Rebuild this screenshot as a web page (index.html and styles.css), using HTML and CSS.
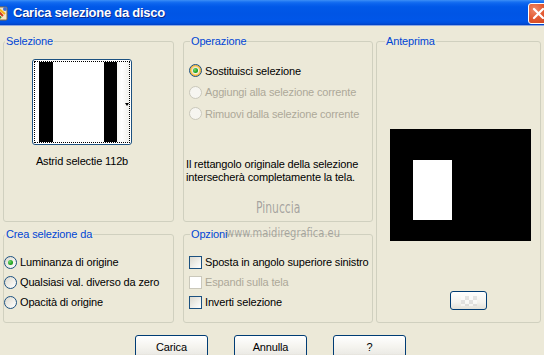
FILE: index.html
```html
<!DOCTYPE html>
<html lang="it">
<head>
<meta charset="utf-8">
<title>Carica selezione da disco</title>
<link rel="stylesheet" href="styles.css">
</head>
<body>
<div class="window">
  <div class="titlebar">
    <div class="title-left">
      <svg class="app-icon" width="16" height="16" viewBox="0 0 16 16">
        <rect x="1" y="2" width="12" height="13" rx="1" fill="#f4e7c8" stroke="#8a6a3a" stroke-width="1"/>
        <path d="M3 5 L9 11" stroke="#d23a1e" stroke-width="2"/>
        <path d="M5 4 L11 9" stroke="#f2b21b" stroke-width="2"/>
        <path d="M3 9 L7 13" stroke="#2f8f2f" stroke-width="2"/>
        <circle cx="11" cy="4" r="2" fill="#3c6fd8"/>
      </svg>
      <span class="title-text">Carica selezione da disco</span>
    </div>
    <div class="close-btn">
      <svg width="21" height="21" viewBox="0 0 21 21">
        <path d="M6 6 L15 15 M15 6 L6 15" stroke="#fff" stroke-width="2.2" stroke-linecap="round"/>
      </svg>
    </div>
  </div>

  <div class="content">
    <fieldset class="group g-sel">
      <legend class="lg-3">Selezione</legend>
      <div class="sel-wrap">
        <div class="thumb">
          <div class="thumb-inner">
            <span class="t-white t-w1"></span>
            <span class="t-black t-b1"></span>
            <span class="t-white t-w2"></span>
            <span class="t-black t-b2"></span>
            <span class="t-strip"><span class="t-arrow"></span></span>
          </div>
        </div>
        <div class="sel-name">Astrid selectie 112b</div>
      </div>
    </fieldset>

    <fieldset class="group g-op">
      <legend class="lg-8">Operazione</legend>
      <div class="op-list">
        <div class="row r-op"><span class="radio checked focus"></span><span>Sostituisci selezione</span></div>
        <div class="row r-op disabled"><span class="radio"></span><span>Aggiungi alla selezione corrente</span></div>
        <div class="row r-op disabled"><span class="radio"></span><span>Rimuovi dalla selezione corrente</span></div>
      </div>
      <p class="desc">Il rettangolo originale della selezione<br>intersecherà completamente la tela.</p>
    </fieldset>

    <fieldset class="group g-prev">
      <legend class="lg-10">Anteprima</legend>
      <div class="preview">
        <div class="preview-sel"></div>
      </div>
      <div class="mini-btn"><span class="checker"></span></div>
    </fieldset>

    <fieldset class="group g-crea">
      <legend class="lg-3">Crea selezione da</legend>
      <div class="list list-crea">
        <div class="row r-20"><span class="radio checked"></span><span>Luminanza di origine</span></div>
        <div class="row r-20"><span class="radio"></span><span>Qualsiasi val. diverso da zero</span></div>
        <div class="row r-20"><span class="radio"></span><span>Opacità di origine</span></div>
      </div>
    </fieldset>

    <fieldset class="group g-opz">
      <legend class="lg-8">Opzioni</legend>
      <div class="list list-opz">
        <div class="row r-20"><span class="check"></span><span>Sposta in angolo superiore sinistro</span></div>
        <div class="row r-20 disabled"><span class="check"></span><span>Espandi sulla tela</span></div>
        <div class="row r-20"><span class="check"></span><span>Inverti selezione</span></div>
      </div>
    </fieldset>
  </div>

  <div class="buttons">
    <div class="btn">Carica</div>
    <div class="btn">Annulla</div>
    <div class="btn">?</div>
  </div>

  <div class="wm wm-name">Pinuccia</div>
  <div class="wm wm-url">www.maidiregrafica.eu</div>
</div>
</body>
</html>
```

FILE: styles.css
```css
* { box-sizing: border-box; }
html, body { margin: 0; padding: 0; }
body {
  font-family: "Liberation Sans", Arial, sans-serif;
  font-size: 11px;
  letter-spacing: -0.15px;
  color: #000;
  background: #ECE9D8;
}
.window {
  position: relative;
  width: 544px;
  height: 355px;
  overflow: hidden;
  background: #ECE9D8;
}

/* Title bar */
.titlebar {
  height: 26px;
  display: flex;
  align-items: center;
  justify-content: space-between;
  background: linear-gradient(to bottom,
    #3D8FF6 0px, #1770F2 2px, #0A62ED 4px, #0058E8 7px,
    #0055E5 14px, #0056E8 20px, #0050DF 23px, #0040C4 25px, #003AB0 26px);
  border-bottom: 1px solid #8FA8E0;
}
.title-left { display: flex; align-items: center; }
.app-icon { margin-left: -6px; }
.title-text {
  margin-left: 3px;
  color: #fff;
  font-weight: bold;
  font-size: 13px;
  letter-spacing: -0.25px;
  text-shadow: 1px 1px 0 #0A2A8C;
}
.close-btn {
  width: 21px;
  height: 21px;
  margin-right: -5px;
  margin-top: 1px;
  border: 1px solid #fff;
  border-radius: 3px;
  background: radial-gradient(circle at 30% 30%, #F08A68 0, #E2582F 50%, #C8401C 100%);
  display: flex;
}
.close-btn svg { margin: -1px; }

/* Content grid */
.content {
  display: grid;
  grid-template-columns: 180px 193px 165px;
  grid-template-rows: 187px 95px;
  row-gap: 6px;
  padding: 9px 0 0 3px;
}
.group {
  margin: 0;
  padding: 0;
  min-width: 0;
  border: 1px solid #D0D0BF;
  border-radius: 3px;
}
.group legend {
  font-size: 11px;
  line-height: 13px;
  height: 13px;
  color: #0046D5;
  padding: 0 1px;
}
.lg-3 { margin-left: 1px; }
.lg-8 { margin-left: 6px; }
.lg-10 { margin-left: 8px; }

.g-sel { grid-column: 1; grid-row: 1; width: 171px; }
.g-op { grid-column: 2; grid-row: 1; width: 190px; }
.g-prev { grid-column: 3; grid-row: 1 / span 2; }
.g-crea { grid-column: 1; grid-row: 2; width: 171px; }
.g-opz { grid-column: 2; grid-row: 2; width: 190px; }

/* Selezione */
.sel-wrap {
  width: 100px;
  margin: 11px 0 0 28px;
  display: flex;
  flex-direction: column;
  align-items: center;
}
.thumb {
  width: 100px;
  height: 86px;
  border: 1px solid #1C5180;
  border-radius: 3px;
  background: #fff;
  padding: 1px;
}
.thumb-inner {
  height: 100%;
  border: 1px dotted #000;
  display: flex;
}
.t-white { background: #fff; }
.t-black { background: #000; }
.t-w1 { width: 4px; }
.t-b1 { width: 14px; }
.t-w2 { width: 51px; }
.t-b2 { width: 13px; }
.t-strip {
  flex: 1;
  background: linear-gradient(to right, #F4F4F2, #FFFFFF 40%, #F0F0EC);
  display: flex;
  align-items: center;
  justify-content: flex-end;
  padding-top: 5px;
}
.t-arrow {
  width: 0;
  height: 0;
  border-left: 2.5px solid transparent;
  border-right: 2.5px solid transparent;
  border-top: 3px solid #000;
}
.sel-name {
  margin-top: 10px;
  white-space: nowrap;
  line-height: 13px;
}

/* Rows */
.row {
  display: flex;
  align-items: center;
  gap: 3px;
  white-space: nowrap;
}
.r-op { height: 21.5px; }
.r-20 { height: 20px; }
.disabled { color: #ACA899; }

.op-list { margin: 12px 0 0 5px; }
.desc {
  margin: 33px 0 0 2px;
  line-height: 13px;
}
.list-crea { margin: 11px 0 0 0; }
.list-opz { margin: 11px 0 0 5px; }

.radio {
  width: 13px;
  height: 13px;
  flex: none;
  border-radius: 50%;
  border: 1px solid #1C5180;
  background: linear-gradient(135deg, #DCD9CF 0%, #F2F1EC 60%, #FFFFFF 100%);
  display: flex;
  align-items: center;
  justify-content: center;
}
.radio.focus {
  box-shadow: inset 0 0 0 1px #F8B636, inset 0 0 0 2px #FAD27A;
}
.radio.checked::after {
  content: "";
  width: 5px;
  height: 5px;
  border-radius: 50%;
  background: radial-gradient(circle at 35% 35%, #6FDB6F 0, #21A121 60%, #1A8A1A 100%);
}
.disabled .radio {
  border-color: #CAC8BB;
  background: #F6F5F0;
}
.check {
  width: 13px;
  height: 13px;
  flex: none;
  border: 1px solid #1C5180;
  background: linear-gradient(135deg, #DCD9CF 0%, #F2F1EC 60%, #FFFFFF 100%);
}
.disabled .check {
  border-color: #CAC8BB;
  background: #FFFFFF;
}

/* Anteprima */
.preview {
  width: 141px;
  height: 112px;
  margin: 81px 0 0 13px;
  background: #000;
  padding: 31px 0 0 23px;
}
.preview-sel {
  width: 39px;
  height: 60px;
  background: #fff;
}
.mini-btn {
  width: 37px;
  height: 19px;
  margin: 50px 0 0 73px;
  border: 1px solid #003C74;
  border-radius: 3px;
  background: linear-gradient(to bottom, #FFFFFF 0%, #F4F3EE 60%, #E3E1D8 100%);
  display: flex;
  align-items: center;
  justify-content: center;
}
.checker {
  width: 16px;
  height: 10px;
  opacity: 0.55;
  background-color: #fff;
  background-image:
    linear-gradient(45deg, #D4D4D4 25%, transparent 25%, transparent 75%, #D4D4D4 75%),
    linear-gradient(45deg, #D4D4D4 25%, transparent 25%, transparent 75%, #D4D4D4 75%);
  background-size: 8px 8px;
  background-position: 0 0, 4px 4px;
}

/* Buttons */
.buttons {
  display: flex;
  gap: 26px;
  padding: 12px 0 0 135px;
}
.btn {
  width: 73px;
  height: 23px;
  flex: none;
  border: 1px solid #003C74;
  border-radius: 3px;
  background: linear-gradient(to bottom, #FFFFFF 0%, #F5F4EF 50%, #ECEBE6 85%, #D6D0C5 100%);
  display: flex;
  align-items: center;
  justify-content: center;
  font-size: 11px;
}

/* Watermarks */
.wm {
  position: absolute;
  font-family: "DejaVu Sans Condensed", "DejaVu Sans", sans-serif;
  white-space: nowrap;
  letter-spacing: 0;
  pointer-events: none;
}
.wm-name {
  left: 256px;
  top: 199px;
  font-size: 15px;
  color: rgba(140, 140, 140, 0.75);
  transform: scaleX(0.8);
  transform-origin: left top;
}
.wm-url {
  left: 226px;
  top: 225px;
  font-size: 13px;
  color: rgba(120, 120, 120, 0.6);
  transform: scaleX(0.85);
  transform-origin: left top;
}
```
